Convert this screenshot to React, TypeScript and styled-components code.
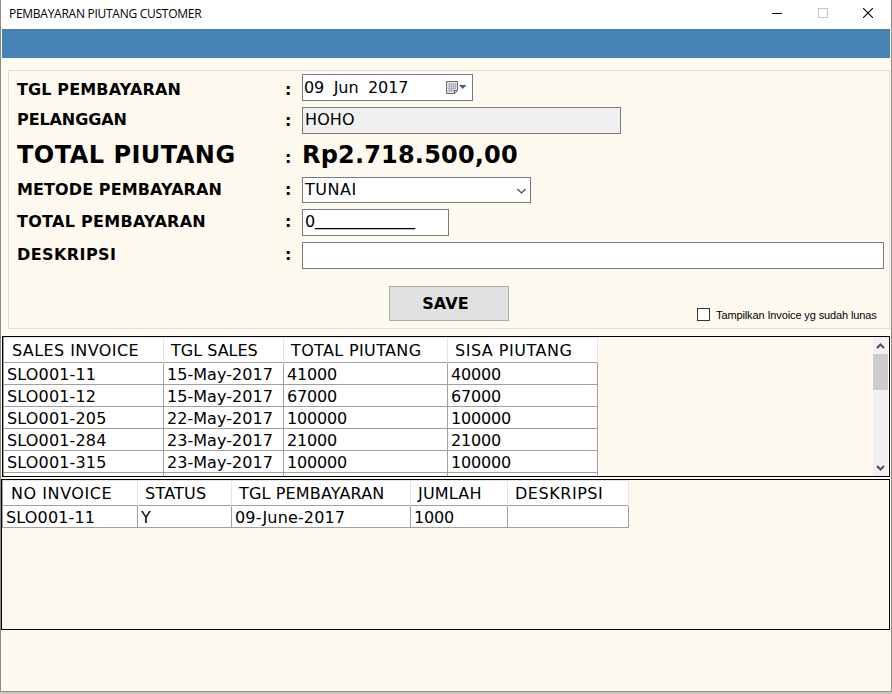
import React from "react";
import styled, { createGlobalStyle } from "styled-components";

const GlobalStyle = createGlobalStyle`
  * { box-sizing: border-box; }
  body {
    margin: 0;
    overflow: hidden;
    font: 16px/19px "DejaVu Sans", Verdana, sans-serif;
    color: #000;
  }
`;

const Desktop = styled.div`
  width: 892px;
  height: 694px;
  background: #c9c6be;
`;

const Window = styled.main`
  display: flex;
  flex-direction: column;
  width: 892px;
  height: 692px;
  border: 1px solid #8f8b88;
  border-top: 0;
  background: #fffaf0;
`;

const TitleBar = styled.header`
  display: flex;
  justify-content: space-between;
  height: 29px;
  padding-left: 8px;
  background: #fff;
`;

const Title = styled.h1`
  margin: 0;
  font: 12px/27px "Open Sans", "Segoe UI", sans-serif;
  letter-spacing: -0.27px;
  white-space: nowrap;
`;

const WindowButtons = styled.div`
  display: flex;
`;

const WindowButton = styled.button`
  display: flex;
  justify-content: center;
  width: 45.5px;
  height: 29px;
  padding: 8px 0 0;
  border: 0;
  background: none;
`;

const Ribbon = styled.div`
  height: 29px;
  margin: 0 0 0 1px;
  width: 888px;
  background: #4682b4;
`;

const PaymentForm = styled.form`
  height: 259px;
  width: 882px;
  margin: 12px 0 0 7px;
  padding: 3px 5px 0 8px;
  border: 1px solid #dcdcdc;
`;

const FormRow = styled.div<{ $height?: number; $gap?: number }>`
  display: grid;
  grid-template-columns: 268px 17px 1fr;
  align-items: start;
  height: ${(p) => p.$height ?? 27}px;
  margin-bottom: ${(p) => p.$gap ?? 6}px;
`;

const Label = styled.label<{ $top?: number; $spacing?: number; $large?: boolean }>`
  padding-top: ${(p) => p.$top ?? 3}px;
  font-weight: bold;
  font-size: ${(p) => (p.$large ? 24 : 16)}px;
  line-height: ${(p) => (p.$large ? 28 : 19)}px;
  letter-spacing: ${(p) => p.$spacing ?? 0}px;
  white-space: nowrap;
`;

const Colon = styled.span<{ $top?: number }>`
  padding-top: ${(p) => p.$top ?? 3}px;
  font-weight: bold;
`;

const Field = styled.div<{ $width: number; $height?: number; $readOnly?: boolean; $spacing?: number }>`
  display: flex;
  width: ${(p) => p.$width}px;
  height: ${(p) => p.$height ?? 27}px;
  padding: 2px 4px 0 2px;
  border: 1px solid #7a7a7a;
  background: ${(p) => (p.$readOnly ? "#f0f0f0" : "#fff")};
  letter-spacing: ${(p) => p.$spacing ?? 0}px;
  white-space: pre;
`;

const DateField = styled(Field)`
  padding: 3px 5px 0 1px;
  justify-content: space-between;
  word-spacing: -0.3px;
`;

const ComboField = styled(Field)`
  justify-content: space-between;
`;

const MaskBlanks = styled.span`
  display: inline-block;
  transform: translateY(-2px) scaleX(1.25);
  transform-origin: left;
`;

const CalendarIcon = styled.svg`
  margin-top: 3px;
`;

const ComboArrow = styled.svg`
  margin-top: 7px;
`;

const FormActions = styled.div`
  display: flex;
  justify-content: space-between;
  margin-top: 17px;
  padding: 0 7px 0 372px;
`;

const SaveButton = styled.button`
  width: 120px;
  height: 35px;
  padding: 0 7px 1px 0;
  border: 1px solid #adadad;
  background: #e1e1e1;
  color: #000;
  font: bold 16px/19px "DejaVu Sans", Verdana, sans-serif;
  letter-spacing: 0.1px;
`;

const CheckOption = styled.label`
  display: flex;
  gap: 6px;
  width: 180px;
  padding-top: 22px;
  font: 11px/14px "Liberation Sans", Arial, sans-serif;
  letter-spacing: -0.12px;
  white-space: nowrap;
`;

const CheckBox = styled.span`
  flex: none;
  width: 13px;
  height: 13px;
  border: 1px solid #333;
  background: #fff;
`;

const GridPanel = styled.section<{ $height: number; $left: number; $top: number }>`
  display: flex;
  flex: none;
  justify-content: space-between;
  height: ${(p) => p.$height}px;
  width: ${(p) => 889 - p.$left}px;
  margin: ${(p) => p.$top}px 0 0 ${(p) => p.$left}px;
  border: 1px solid #000;
  overflow: hidden;
`;

const DataGrid = styled.div<{ $columns: string }>`
  display: grid;
  grid-template-columns: ${(p) => p.$columns};
  grid-template-rows: 26px;
  grid-auto-rows: 22px;
  align-self: flex-start;
  border-left: 1px solid #a0a0a0;
`;

const HeaderCell = styled.div<{ $spacing?: number }>`
  padding-left: 7px;
  border: solid #e5e5e5;
  border-width: 1px 1px 0 0;
  box-shadow: inset 0 -1px #a0a0a0;
  background: #fff;
  line-height: 26px;
  letter-spacing: ${(p) => p.$spacing ?? 0}px;
  white-space: nowrap;

  &:first-child {
    padding-left: 8px;
  }
`;

const Cell = styled.div<{ $spacing?: number }>`
  padding-left: 3px;
  border: solid #a0a0a0;
  border-width: 0 1px 1px 0;
  background: #fff;
  line-height: 24px;
  letter-spacing: ${(p) => p.$spacing ?? 0}px;
  white-space: nowrap;
`;

const ScrollBar = styled.div`
  display: flex;
  flex-direction: column;
  width: 15px;
  margin-right: 1px;
  background: #f0f0f0;
`;

const ScrollArrow = styled.svg`
  flex: none;
  width: 15px;
  height: 17px;
`;

const ScrollThumb = styled.div`
  height: 36px;
  margin-bottom: auto;
  background: #cdcdcd;
`;

type Column = { title: string; spacing: number; cellSpacing: number };

const invoiceColumns: Column[] = [
  { title: "SALES INVOICE", spacing: 0.42, cellSpacing: 0.16 },
  { title: "TGL SALES", spacing: 0, cellSpacing: 0.04 },
  { title: "TOTAL PIUTANG", spacing: 0.36, cellSpacing: -0.18 },
  { title: "SISA PIUTANG", spacing: 0.5, cellSpacing: -0.18 },
];

const invoices = [
  ["SLO001-11", "15-May-2017", "41000", "40000"],
  ["SLO001-12", "15-May-2017", "67000", "67000"],
  ["SLO001-205", "22-May-2017", "100000", "100000"],
  ["SLO001-284", "23-May-2017", "21000", "21000"],
  ["SLO001-315", "23-May-2017", "100000", "100000"],
  ["", "", "", ""],
];

const paymentColumns: Column[] = [
  { title: "NO INVOICE", spacing: 0.56, cellSpacing: 0.16 },
  { title: "STATUS", spacing: 0.22, cellSpacing: 0 },
  { title: "TGL PEMBAYARAN", spacing: 0.15, cellSpacing: 0.15 },
  { title: "JUMLAH", spacing: 0.2, cellSpacing: -0.18 },
  { title: "DESKRIPSI", spacing: 0.54, cellSpacing: 0 },
];

const payments = [["SLO001-11", "Y", "09-June-2017", "1000", ""]];

function Table({ layout, columns, rows }: { layout: string; columns: Column[]; rows: string[][] }) {
  return (
    <DataGrid $columns={layout}>
      {columns.map((c) => (
        <HeaderCell key={c.title} $spacing={c.spacing}>{c.title}</HeaderCell>
      ))}
      {rows.map((row, r) =>
        row.map((value, c) => (
          <Cell key={`${r}-${c}`} $spacing={columns[c].cellSpacing}>{value}</Cell>
        ))
      )}
    </DataGrid>
  );
}

export default function App() {
  return (
    <Desktop>
      <GlobalStyle />
      <Window>
        <TitleBar>
          <Title>PEMBAYARAN PIUTANG CUSTOMER</Title>
          <WindowButtons>
            <WindowButton aria-label="Minimize">
              <svg width="10" height="10"><path d="M0 5.5H10" stroke="#000" /></svg>
            </WindowButton>
            <WindowButton aria-label="Maximize">
              <svg width="10" height="10"><rect x=".5" y=".5" width="9" height="9" fill="none" stroke="#c4c4c4" /></svg>
            </WindowButton>
            <WindowButton aria-label="Close">
              <svg width="10" height="10"><path d="M0 0L10 10M10 0L0 10" stroke="#000" strokeWidth="1.1" /></svg>
            </WindowButton>
          </WindowButtons>
        </TitleBar>
        <Ribbon />

        <PaymentForm>
          <FormRow>
            <Label $top={6} $spacing={0.14}>TGL PEMBAYARAN</Label>
            <Colon $top={6}>:</Colon>
            <DateField $width={171} $spacing={-0.06}>
              09  Jun  2017
              <CalendarIcon width="21" height="13">
                <path d="M.5 .5H11.5V9.5L9 12.5H.5Z" fill="#e0e1e8" stroke="#6c6c70" />
                <path d="M2 3.5H10M2 5.5H10M2 7.5H10M2 9.5H8M3.5 2V11M5.5 2V11M7.5 2V11M9.5 2V8" stroke="#9c9eaa" strokeWidth=".6" />
                <path d="M8.5 12V9.5H11.5" fill="none" stroke="#6c6c70" />
                <path d="M13 4H20.5L16.75 8Z" fill="#4a5f80" />
              </CalendarIcon>
            </DateField>
          </FormRow>
          <FormRow $gap={0}>
            <Label $spacing={-0.1}>PELANGGAN</Label>
            <Colon $top={4}>:</Colon>
            <Field $width={319} $readOnly $spacing={0.1}>HOHO</Field>
          </FormRow>
          <FormRow $height={43} $gap={0}>
            <Label $large $top={7} $spacing={0.48}>TOTAL PIUTANG</Label>
            <Colon $top={14}>:</Colon>
            <Label as="output" $large $top={7} $spacing={0.18}>Rp2.718.500,00</Label>
          </FormRow>
          <FormRow $height={26}>
            <Label $spacing={0.1}>METODE PEMBAYARAN</Label>
            <Colon>:</Colon>
            <ComboField $width={229} $height={26} $spacing={0.5}>
              TUNAI
              <ComboArrow width="9" height="8"><path d="M.5 2L4.5 6L8.5 2" fill="none" stroke="#444" strokeWidth="1.2" /></ComboArrow>
            </ComboField>
          </FormRow>
          <FormRow>
            <Label $spacing={0.28}>TOTAL PEMBAYARAN</Label>
            <Colon>:</Colon>
            <Field $width={147}>0<MaskBlanks>__________</MaskBlanks></Field>
          </FormRow>
          <FormRow $gap={0}>
            <Label $spacing={0.42}>DESKRIPSI</Label>
            <Colon>:</Colon>
            <Field $width={582} />
          </FormRow>
          <FormActions>
            <SaveButton type="button">SAVE</SaveButton>
            <CheckOption>
              <CheckBox role="checkbox" aria-checked="false" />
              Tampilkan Invoice yg sudah lunas
            </CheckOption>
          </FormActions>
        </PaymentForm>

        <GridPanel $height={141} $left={1} $top={7}>
          <Table layout="160px 120px 164px 150px" columns={invoiceColumns} rows={invoices} />
          <ScrollBar>
            <ScrollArrow viewBox="0 0 15 17"><path d="M4 11L7.5 7.5L11 11" fill="none" stroke="#505050" strokeWidth="2" /></ScrollArrow>
            <ScrollThumb />
            <ScrollArrow viewBox="0 0 15 17"><path d="M4 7L7.5 10.5L11 7" fill="none" stroke="#505050" strokeWidth="2" /></ScrollArrow>
          </ScrollBar>
        </GridPanel>

        <GridPanel $height={151} $left={0} $top={2}>
          <Table layout="135px 94px 179px 97px 121px" columns={paymentColumns} rows={payments} />
        </GridPanel>
      </Window>
    </Desktop>
  );
}
